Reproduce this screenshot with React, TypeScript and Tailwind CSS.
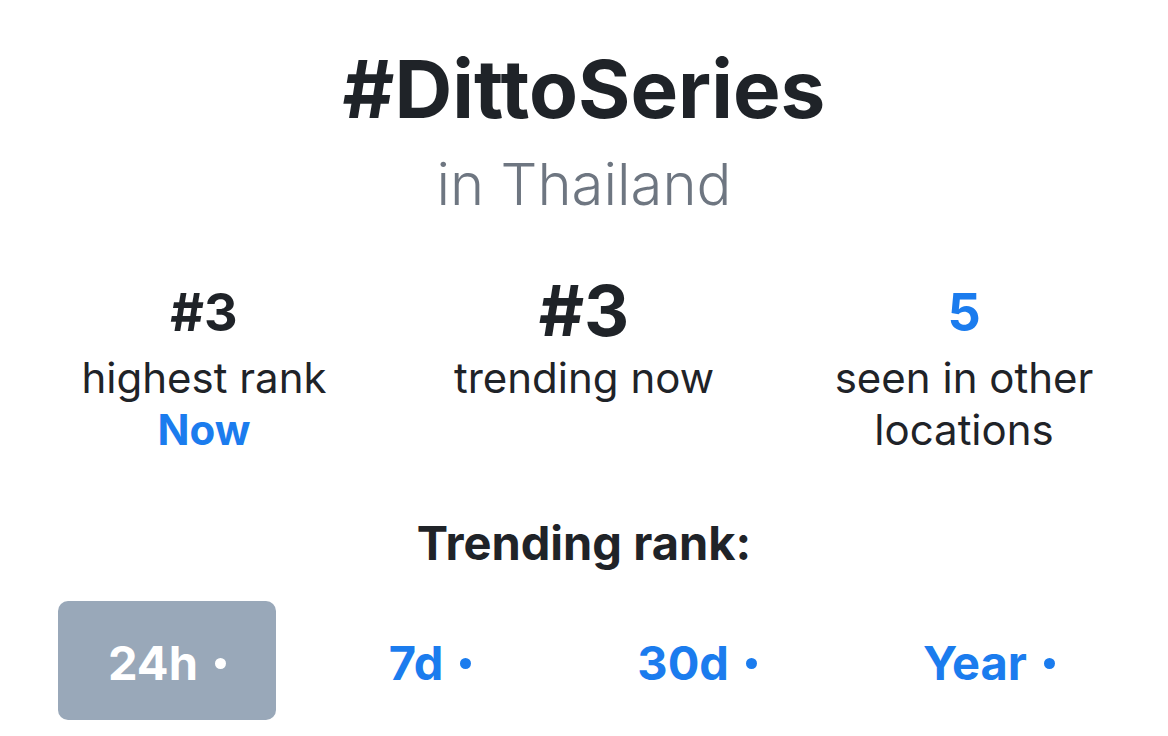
import React from "react";

const tabs = [
    { label: "24h", active: true },
    { label: "7d", active: false },
    { label: "30d", active: false },
    { label: "Year", active: false },
];

function Dot() {
    return <span className="ml-[17px] inline-block h-[11px] w-[11px] rounded-full bg-current" />;
}

export default function App() {
    return (
        <div className="h-[736px] w-[1168px] overflow-hidden bg-white font-['Inter',sans-serif] text-[#1f2328]">
            <h1 className="pt-[49px] text-center text-[80px] leading-[80px] font-bold">#DittoSeries</h1>
            <p className="mt-[25px] text-center text-[58px] leading-[60px] font-light text-[#6e7681]">in Thailand</p>

            <div className="mt-[65px] grid grid-cols-3 px-[14px]">
                <div className="flex flex-col items-center text-center">
                    <div className="h-[64px] pt-[8px] text-[52px] leading-[52px] font-bold">#3</div>
                    <div className="mt-[9px] text-[42px] leading-[52px]">highest rank</div>
                    <div className="text-[42px] leading-[52px] font-bold text-[#1b7cee]">Now</div>
                </div>
                <div className="flex flex-col items-center text-center">
                    <div className="h-[64px] text-[70px] leading-[64px] font-bold">#3</div>
                    <div className="mt-[9px] text-[42px] leading-[52px]">trending now</div>
                </div>
                <div className="flex flex-col items-center text-center">
                    <div className="h-[64px] pt-[8px] text-[52px] leading-[52px] font-bold text-[#1b7cee]">5</div>
                    <div className="mt-[9px] text-[42px] leading-[52px]">
                        seen in other
                        <br />
                        locations
                    </div>
                </div>
            </div>

            <h2 className="mt-[63px] text-center text-[47px] leading-[47px] font-bold">Trending rank:</h2>

            <div className="mt-[35px] flex justify-between pl-[58px] pr-[60px]">
                {tabs.map((tab) => (
                    <div
                        key={tab.label}
                        className={
                            tab.active
                                ? "flex h-[119px] items-center rounded-[10px] bg-[#99a8b9] pl-[50px] pr-[50px] pt-[5px] text-[47px] font-bold text-white"
                                : "flex h-[119px] items-center pl-[50px] pr-[53px] pt-[5px] text-[47px] font-bold text-[#1b7cee]"
                        }
                    >
                        <span>{tab.label}</span>
                        <Dot />
                    </div>
                ))}
            </div>
        </div>
    );
}
